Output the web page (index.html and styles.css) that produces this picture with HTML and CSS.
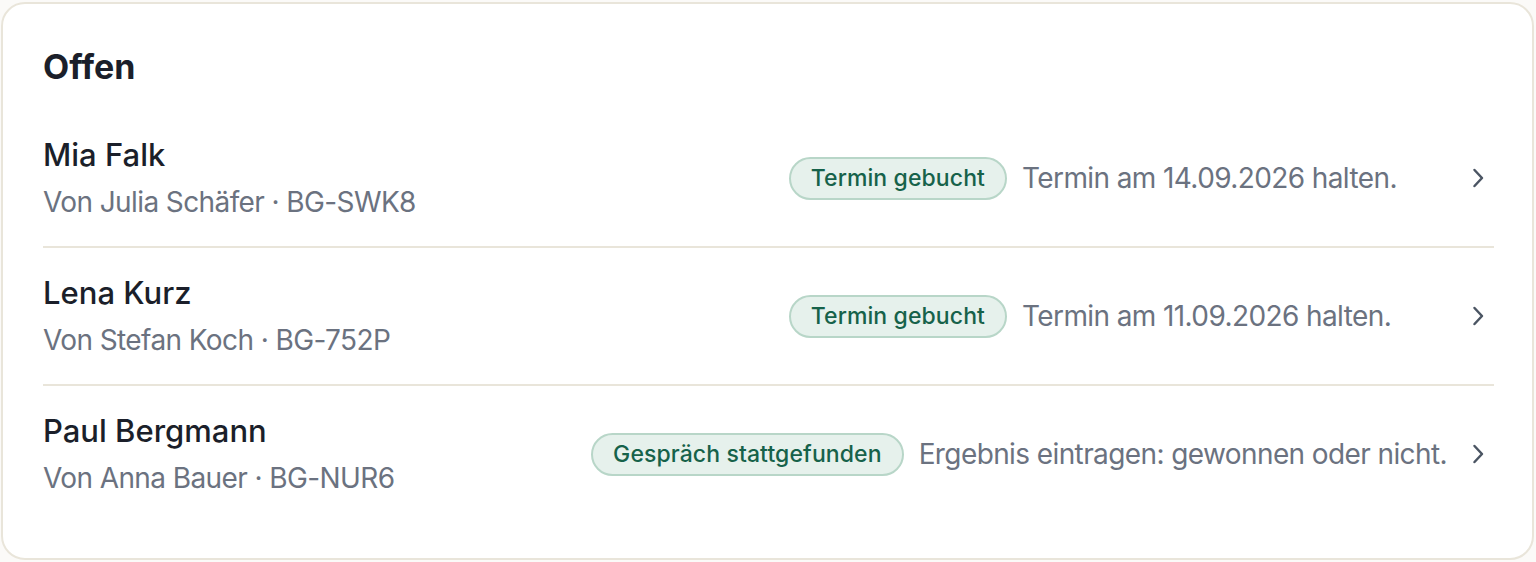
FILE: index.html
```html
<!DOCTYPE html>
<html lang="de">
<head>
<meta charset="utf-8">
<title>Offen</title>
<link rel="stylesheet" href="styles.css">
</head>
<body>
<section class="card">
  <h2 class="title">Offen</h2>
  <ul class="list">
    <li class="row">
      <div class="who">
        <div class="name">Mia Falk</div>
        <div class="sub">Von Julia Schäfer · BG-SWK8</div>
      </div>
      <div class="meta">
        <span class="badge">Termin gebucht</span>
        <span class="action">Termin am 14.09.2026 halten.</span>
        <svg class="chev" viewBox="0 0 24 24" width="24" height="24"><path d="M9.5 4L17 12L9.5 20" fill="none" stroke="currentColor" stroke-width="2.5" stroke-linecap="round" stroke-linejoin="round"/></svg>
      </div>
    </li>
    <li class="row">
      <div class="who">
        <div class="name">Lena Kurz</div>
        <div class="sub">Von Stefan Koch · BG-752P</div>
      </div>
      <div class="meta">
        <span class="badge">Termin gebucht</span>
        <span class="action">Termin am 11.09.2026 halten.</span>
        <svg class="chev" viewBox="0 0 24 24" width="24" height="24"><path d="M9.5 4L17 12L9.5 20" fill="none" stroke="currentColor" stroke-width="2.5" stroke-linecap="round" stroke-linejoin="round"/></svg>
      </div>
    </li>
    <li class="row">
      <div class="who">
        <div class="name">Paul Bergmann</div>
        <div class="sub">Von Anna Bauer · BG-NUR6</div>
      </div>
      <div class="meta">
        <span class="badge">Gespräch stattgefunden</span>
        <span class="action">Ergebnis eintragen: gewonnen oder nicht.</span>
        <svg class="chev" viewBox="0 0 24 24" width="24" height="24"><path d="M9.5 4L17 12L9.5 20" fill="none" stroke="currentColor" stroke-width="2.5" stroke-linecap="round" stroke-linejoin="round"/></svg>
      </div>
    </li>
  </ul>
</section>
</body>
</html>
```
FILE: styles.css
```css
* { box-sizing: border-box; }
html, body { margin: 0; padding: 0; background: #fbfaf8; }
body {
  font-family: Inter, "Noto Sans", sans-serif;
  color: #1b1f2a;
  padding: 2px 2px 2px 1px;
}
.card {
  background: #ffffff;
  border: 2px solid #e9e5da;
  border-radius: 24px;
  padding: 42px 38px 40px 40px;
  height: 558px;
}
.title {
  margin: 0 0 22px 0;
  font-size: 34px;
  line-height: 42px;
  font-weight: 700;
}
.list { list-style: none; margin: 0; padding: 0; }
.row {
  display: flex;
  align-items: center;
  justify-content: space-between;
  padding: 26px 0 27.5px 0;
  border-bottom: 2px solid #e9e5da;
}
.row:last-child { border-bottom: none; }
.who { display: flex; flex-direction: column; gap: 10.5px; }
.name {
  font-size: 31px;
  line-height: 38px;
  font-weight: 500;
  color: #1b1f2a;
}
.sub {
  font-size: 28px;
  line-height: 34px;
  letter-spacing: -0.6px;
  color: #6b7280;
}
.meta { display: flex; align-items: center; padding-top: 2px; }
.badge {
  display: inline-block;
  font-size: 23px;
  line-height: 29px;
  font-weight: 500;
  letter-spacing: 0.1px;
  color: #16624a;
  background: #e6f1ec;
  border: 2px solid #b8d6c8;
  border-radius: 999px;
  padding: 5px 20px;
}
.action {
  margin-left: 15px;
  min-width: 425px;
  font-size: 28px;
  line-height: 34px;
  letter-spacing: -0.6px;
  color: #6b7280;
}
.chev {
  margin-left: 18px;
  margin-right: 5px;
  color: #4b5563;
  display: block;
}
```
